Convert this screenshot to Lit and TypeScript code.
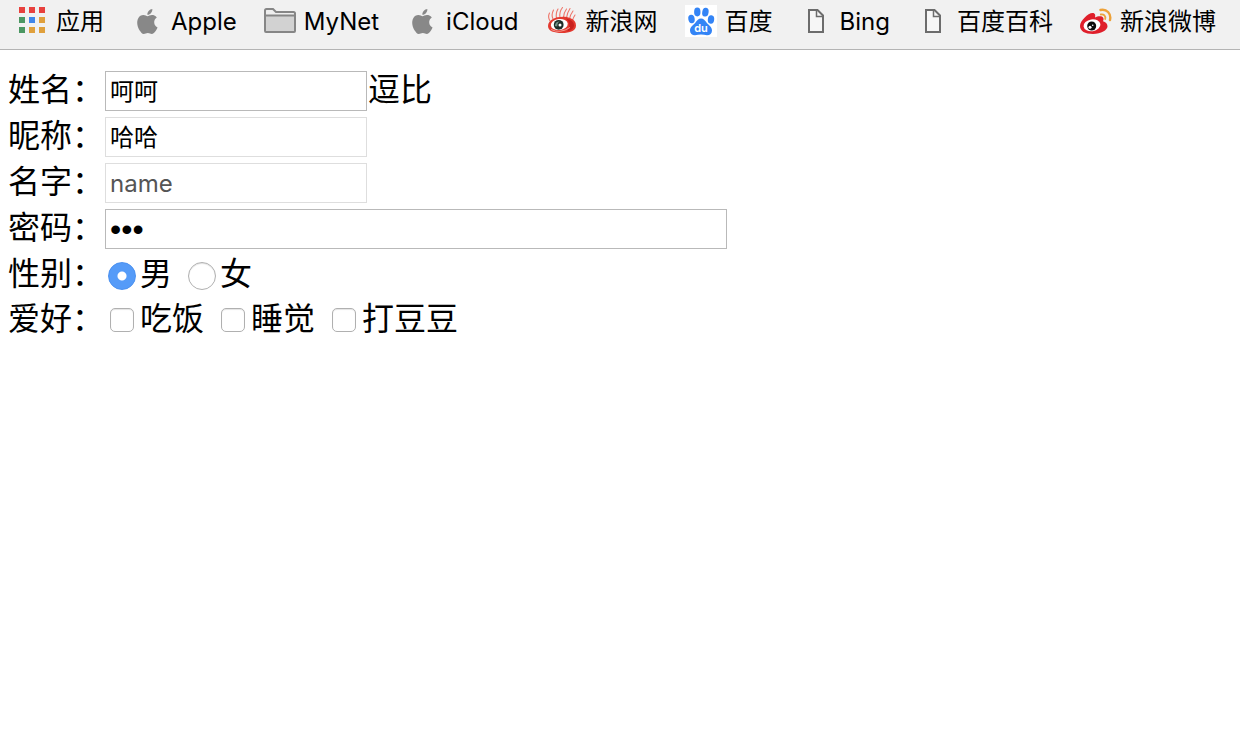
import { LitElement, html, css, svg } from "lit";
import { customElement } from "lit/decorators.js";

const frame = (content: unknown) => html`
  <svg class="icon" viewBox="0 0 32 32" width="32" height="32" aria-hidden="true">${content}</svg>
`;

const appsIcon = () => frame(svg`
  <g fill="#e8413d"><rect x="3" y="2" width="6" height="6"/><rect x="13" y="2" width="6" height="6"/><rect x="23" y="2" width="6" height="6"/></g>
  <g fill="#4b9762"><rect x="3" y="12" width="6" height="6"/><rect x="3" y="22" width="6" height="6"/></g>
  <rect x="13" y="12" width="6" height="6" fill="#3f86ea"/>
  <g fill="#e0a03c"><rect x="23" y="12" width="6" height="6"/><rect x="13" y="22" width="6" height="6"/><rect x="23" y="22" width="6" height="6"/></g>
`);

const appleIcon = () => frame(svg`
  <path fill="#888" transform="translate(3.9 4) scale(1.04)" d="M12.152 6.896c-.948 0-2.415-1.078-3.96-1.04-2.04.027-3.91 1.183-4.961 3.014-2.117 3.675-.546 9.103 1.519 12.09 1.013 1.454 2.208 3.09 3.792 3.039 1.52-.065 2.09-.987 3.935-.987 1.831 0 2.35.987 3.96.948 1.637-.026 2.676-1.48 3.676-2.948 1.156-1.688 1.636-3.325 1.662-3.415-.039-.013-3.182-1.221-3.22-4.857-.026-3.04 2.48-4.494 2.597-4.559-1.429-2.09-3.623-2.324-4.39-2.376-2-.156-3.675 1.09-4.61 1.09zM15.53 3.83c.843-1.012 1.4-2.427 1.245-3.83-1.207.052-2.662.805-3.532 1.818-.78.896-1.454 2.338-1.273 3.714 1.338.104 2.715-.688 3.559-1.701"/>
`);

const folderIcon = () => frame(svg`
  <path d="M1 26V5.5Q1 4 2.5 4H9l3 3h17.500Q31 7 31 8.500V26q0 1-1 1H2q-1 0-1-1z" fill="#eee" stroke="#868686" stroke-width="2"/>
  <path d="M2 11h28v15H2z" fill="#d2d2d2"/>
  <path d="M1 10.500h30" stroke="#868686" stroke-width="2"/>
`);

const pageIcon = () => frame(svg`
  <path d="M9 5h8.500L23 10.500V27H9z" fill="#f6f6f6" stroke="#6c6c6c" stroke-width="2"/>
  <path d="M16.500 5v6.500H23" fill="none" stroke="#6c6c6c" stroke-width="1.500"/>
`);

const sinaIcon = () => frame(svg`
  <g fill="none" stroke="#ee7468" stroke-width="1.100" stroke-linecap="round">
    <path d="M4 16Q1.500 12 3.500 8M7 14Q5 10 7.500 5M10.500 13Q9.500 8 12 4M14 12.500Q13 7 16.500 2.500M17.500 12.500Q17.500 8 20.500 4M20.500 13Q21 8 24 3.500M23.500 14Q24 10 27 6M26.500 15.500Q27.500 12 29 10"/>
  </g>
  <path d="M2 21c0-3 2-5.500 5-7 4-2.200 12-3 17-1 4 1.600 6 4 6 7.500 0 5.500-6 7.500-14 7.500S2 26 2 21z" fill="#e3392f"/>
  <path d="M20 13.500c5 1 8 3.500 8 7 0 3-3 5-7 6 3-4 3.500-9-1-13z" fill="#c9211f"/>
  <ellipse cx="13.300" cy="19.500" rx="8.500" ry="5.500" fill="#fff" transform="rotate(-6 13.300 19.500)"/>
  <circle cx="12.700" cy="19.800" r="4.900" fill="#1d2c28"/>
  <path d="M8.800 21q.5-4.500 5-4.800-2.800 1.800-2.500 5.300z" fill="#6f8f86"/>
  <circle cx="14" cy="20" r="1.500" fill="#fff"/>
  <path d="M5 24.500q9 4.500 19-2" fill="none" stroke="#f39a90" stroke-width="1"/>
`);

const baiduIcon = () => frame(svg`
  <rect width="32" height="32" fill="#fff"/>
  <g fill="#3384f6">
    <ellipse cx="6.500" cy="14" rx="3.200" ry="4.200" transform="rotate(-10 6.500 14)"/>
    <ellipse cx="12.300" cy="7" rx="3.200" ry="4.400"/>
    <ellipse cx="20.400" cy="7.200" rx="3.200" ry="4.400" transform="rotate(10 20.400 7.200)"/>
    <ellipse cx="26" cy="14.500" rx="3.200" ry="4.200" transform="rotate(6 26 14.500)"/>
    <path d="M16 13.500c2.500 0 4 1.800 5.500 4 2 2.500 5.500 4.300 5.500 8 0 3-2 4.700-5 4.700-2 0-4-.6-6-.6s-4 .6-6 .6c-3 0-5-1.700-5-4.700 0-3.700 3.500-5.500 5.500-8 1.500-2.200 3-4 5.500-4z"/>
  </g>
  <text x="16" y="27" text-anchor="middle" font-family="Inter, sans-serif" font-size="11" font-weight="600" fill="#fff">du</text>
`);

const weiboIcon = () => frame(svg`
  <path d="M0 21c0-5 8-13 12.500-13 3 0 3 2.500 2.500 4.500 3-1.500 8-2 8.500 1 .2 1-.2 2-.5 2.700 2.500.8 4.500 2.300 4.500 5C27.500 25 21 29 13 29S0 26 0 21z" fill="#df1f2b"/>
  <ellipse cx="12" cy="20.300" rx="8.500" ry="5.900" fill="#fff" transform="rotate(-8 12 20.300)"/>
  <circle cx="11.700" cy="21" r="4.500" fill="#0c0c0c"/>
  <circle cx="10" cy="22.300" r="1.500" fill="#fff"/><circle cx="12.700" cy="20.300" r=".8" fill="#fff"/>
  <g fill="none" stroke="#eda138" stroke-width="2.400" stroke-linecap="round">
    <path d="M20.500 5c6-1.500 11 3.500 9.500 10"/>
    <path d="M20.800 9.500c3-.7 5.200 1.800 4.400 4.500" stroke-width="1.800"/>
  </g>
`);

const bookmarks = [
  { label: "应用", icon: appsIcon },
  { label: "Apple", icon: appleIcon },
  { label: "MyNet", icon: folderIcon },
  { label: "iCloud", icon: appleIcon },
  { label: "新浪网", icon: sinaIcon },
  { label: "百度", icon: baiduIcon },
  { label: "Bing", icon: pageIcon },
  { label: "百度百科", icon: pageIcon },
  { label: "新浪微博", icon: weiboIcon },
];

@customElement("bookmark-bar")
export class BookmarkBar extends LitElement {
  static styles = css`
    :host { display: block; }
    .bar {
      display: flex;
      gap: 27px;
      padding: 5px 16px 12px;
      background: #f1f1f1;
      border-bottom: 1px solid #b4b4b4;
      overflow: hidden;
    }
    .bookmark {
      display: flex;
      flex: none;
      align-items: center;
      gap: 8px;
      height: 32px;
      font: 24px/32px Inter, "Noto Sans CJK SC", sans-serif;
      color: #000;
      text-decoration: none;
      white-space: nowrap;
    }
    .icon { display: block; flex: none; }
    .title { padding-top: 2px; }
  `;

  render() {
    return html`<nav class="bar" aria-label="书签">
      ${bookmarks.map((b) => html`<a class="bookmark" href="#">${b.icon()}<span class="title">${b.label}</span></a>`)}
    </nav>`;
  }
}

@customElement("profile-form")
export class ProfileForm extends LitElement {
  static styles = css`
    :host { display: block; }
    .form {
      padding: 18px 8px;
      font: 32px/36px "Noto Sans CJK SC", sans-serif;
      color: #000;
    }
    .row { display: flex; align-items: center; height: 46px; }
    .compact { height: 44px; }
    .label { flex: none; width: 96px; padding-bottom: 9px; white-space: nowrap; }
    .field {
      box-sizing: border-box;
      width: 262px;
      height: 40px;
      margin: 0 1px;
      padding: 0 4px;
      border: 1px solid #b9b9b9;
      border-radius: 0;
      outline: none;
      background: #fff;
      color: #000;
      font: 24px/32px Inter, "Noto Sans CJK SC", sans-serif;
    }
    .filled { padding-bottom: 4px; }
    .muted { border-color: #dedede; }
    .field::placeholder { color: #555; opacity: 1; }
    .wide { width: 622px; font: 32px/36px "Liberation Sans", sans-serif; }
    .options { display: flex; gap: 16px; padding-left: 4px; }
    .option { display: flex; align-items: center; gap: 4px; }
    .caption { padding-bottom: 9px; }
    .radio, .check {
      appearance: none;
      flex: none;
      box-sizing: border-box;
      margin: 2px 0 0;
      border: 1px solid #b0b0b0;
      background: #fff;
      box-shadow: inset 0 1px 1px #e4e4e4;
    }
    .radio { width: 28px; height: 28px; border-radius: 50%; }
    .radio:checked {
      border-color: #4a90f0;
      background: radial-gradient(circle, #fff 4px, #559bf8 5px);
      box-shadow: none;
    }
    .checks { gap: 17px; padding-left: 6px; }
    .check { width: 24px; height: 24px; margin: 0 2px 0 0; border-radius: 5px; }
    .check:checked { background: #559bf8; }
  `;

  render() {
    return html`<form class="form">
      <div class="row">
        <label class="label" for="fullname">姓名：</label>
        <input class="field filled" id="fullname" type="text" value="呵呵" />
        <span class="caption">逗比</span>
      </div>
      <div class="row">
        <label class="label" for="nickname">昵称：</label>
        <input class="field filled muted" id="nickname" type="text" value="哈哈" readonly />
      </div>
      <div class="row">
        <label class="label" for="name">名字：</label>
        <input class="field muted" id="name" type="text" placeholder="name" />
      </div>
      <div class="row">
        <label class="label" for="password">密码：</label>
        <input class="field wide" id="password" type="password" value="123" />
      </div>
      <div class="row" role="radiogroup" aria-labelledby="sex">
        <span class="label" id="sex">性别：</span>
        <div class="options">
          <label class="option"><input class="radio" type="radio" name="sex" checked /><span class="caption">男</span></label>
          <label class="option"><input class="radio" type="radio" name="sex" /><span class="caption">女</span></label>
        </div>
      </div>
      <div class="row compact" role="group" aria-labelledby="hobby">
        <span class="label" id="hobby">爱好：</span>
        <div class="options checks">
          ${["吃饭", "睡觉", "打豆豆"].map((h) => html`<label class="option"><input class="check" type="checkbox" name="hobby" value=${h} /><span class="caption">${h}</span></label>`)}
        </div>
      </div>
    </form>`;
  }
}

@customElement("app-root")
export class AppRoot extends LitElement {
  static styles = css`
    :host { display: block; min-height: 100vh; background: #fff; }
  `;

  render() {
    return html`<bookmark-bar></bookmark-bar><profile-form></profile-form>`;
  }
}
